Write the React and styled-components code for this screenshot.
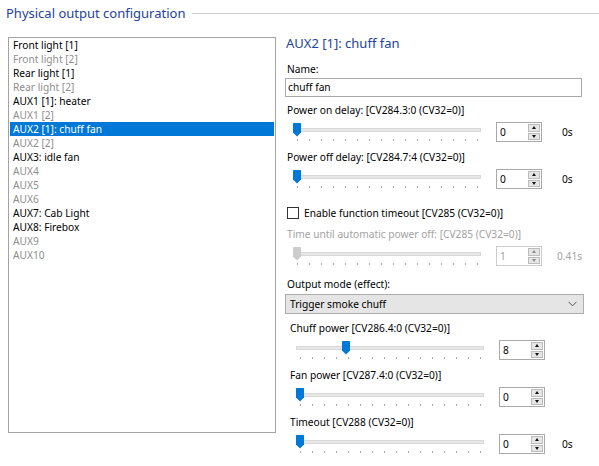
import React from 'react';
import styled, { createGlobalStyle } from 'styled-components';

const Global = createGlobalStyle`
  html, body { margin: 0; padding: 0; background: #fff; }
  body { font-family: "Noto Sans", "Open Sans", sans-serif; font-size: 10.2px; color: #000; }
`;

const Window = styled.div`
  width: 599px;
  height: 466px;
  overflow: hidden;
  background: #fff;
`;

const Header = styled.div`
  display: flex;
  align-items: center;
  padding: 3px 0 0 6px;
  height: 20px;
`;

const HeaderTitle = styled.div`
  font-size: 13px;
  line-height: 20px;
  color: #24439a;
  white-space: nowrap;
`;

const HeaderRule = styled.div`
  flex: 1;
  height: 1px;
  background: #cfcfcf;
  margin-left: 7px;
  margin-top: 1px;
`;

const Main = styled.div`
  display: flex;
  padding-left: 8px;
  margin-top: 10px;
`;

const ListBox = styled.div`
  width: 268px;
  height: 396px;
  box-sizing: border-box;
  border: 1px solid #a3a3a3;
  margin-top: 4px;
  padding: 0 1px;
  flex: none;
`;

const ListItem = styled.div`
  height: 14px;
  line-height: 14px;
  padding-left: 3px;
  white-space: nowrap;
  color: ${p => (p.$selected ? '#fff' : p.$active ? '#000' : '#8d8d8d')};
  background: ${p => (p.$selected ? '#0078d7' : 'transparent')};
`;

const Panel = styled.div`
  width: 300px;
  margin-left: 9px;
  display: flex;
  flex-direction: column;
`;

const PanelTitle = styled.div`
  font-size: 13px;
  line-height: 20px;
  height: 20px;
  color: #24439a;
  padding-left: 1px;
`;

const Label = styled.div`
  height: 14px;
  line-height: 14px;
  margin-top: ${p => p.$mt || 0}px;
  padding-left: 2px;
  white-space: nowrap;
  color: ${p => (p.$disabled ? '#a2a2a2' : '#000')};
`;

const TextBox = styled.div`
  height: 19px;
  box-sizing: border-box;
  border: 1px solid #a9a9a9;
  margin-top: 2px;
  width: 297px;
  padding-left: 2px;
  line-height: 17px;
`;

const SliderRow = styled.div`
  display: flex;
  align-items: flex-start;
  height: 24px;
  margin-top: 3px;
`;

const SliderBox = styled.div`
  position: relative;
  width: 196px;
  height: 24px;
  flex: none;
  margin-left: 4px;
`;

const Track = styled.div`
  position: absolute;
  left: 4px;
  width: 186px;
  top: 8px;
  height: 2px;
  background: #e7e7e7;
  border: 1px solid #d8d8d8;
`;

const ThumbSvg = styled.svg`
  position: absolute;
  top: 3px;
`;

const Ticks = styled.div`
  position: absolute;
  left: 8px;
  width: 181px;
  top: 19px;
  height: 2px;
  display: flex;
  justify-content: space-between;
`;

const Tick = styled.span`
  width: 1px;
  height: 2px;
  background: #a8a8a8;
`;

const Spin = styled.div`
  display: flex;
  width: 46px;
  height: 20px;
  box-sizing: border-box;
  border: 1px solid ${p => (p.$disabled ? '#cccccc' : '#a9a9a9')};
  margin-left: 11px;
  margin-top: 2px;
  background: #fff;
  padding: 1px;
  flex: none;
`;

const SpinValue = styled.div`
  flex: 1;
  padding-left: 2px;
  line-height: 16px;
  color: ${p => (p.$disabled ? '#a2a2a2' : '#000')};
`;

const SpinButtons = styled.div`
  display: flex;
  flex-direction: column;
  gap: 1px;
  width: 12px;
`;

const SpinBtn = styled.div`
  flex: 1;
  box-sizing: border-box;
  background: #e6e6e6;
  border: 1px solid #bcbcbc;
  display: flex;
  align-items: center;
  justify-content: center;
`;

const Arrow = styled.span`
  width: 0;
  height: 0;
  border-left: 2.5px solid transparent;
  border-right: 2.5px solid transparent;
  ${p => (p.$down ? 'border-top' : 'border-bottom')}: 3px solid ${p => (p.$disabled ? '#8a8a8a' : '#111')};
`;

const Unit = styled.div`
  margin-left: ${p => p.$ml || 20}px;
  margin-top: 2px;
  line-height: 20px;
  color: ${p => (p.$disabled ? '#a2a2a2' : '#000')};
`;

const CheckRow = styled.div`
  display: flex;
  align-items: center;
  height: 14px;
  margin-top: 15px;
  padding-left: 2px;
`;

const CheckBox = styled.span`
  width: 12px;
  height: 12px;
  box-sizing: border-box;
  border: 1px solid #333;
  background: #fff;
  margin-right: 5px;
`;

const Select = styled.div`
  display: flex;
  align-items: center;
  justify-content: space-between;
  height: 20px;
  box-sizing: border-box;
  width: 299px;
  margin-top: 3px;
  background: #e5e5e5;
  border: 1px solid #adadad;
  padding: 0 6px 0 4px;
`;

const SubGroup = styled.div`
  display: flex;
  flex-direction: column;
  padding-left: 3px;
`;

const items = [
  ['Front light [1]', true],
  ['Front light [2]', false],
  ['Rear light [1]', true],
  ['Rear light [2]', false],
  ['AUX1 [1]: heater', true],
  ['AUX1 [2]', false],
  ['AUX2 [1]: chuff fan', true, true],
  ['AUX2 [2]', false],
  ['AUX3: idle fan', true],
  ['AUX4', false],
  ['AUX5', false],
  ['AUX6', false],
  ['AUX7: Cab Light', true],
  ['AUX8: Firebox', true],
  ['AUX9', false],
  ['AUX10', false],
];

function Slider({ value, max, disabled }) {
  const left = 4 + (value / max) * 180;
  return (
    <SliderBox>
      <Track />
      <ThumbSvg width="8" height="14" viewBox="0 0 8 14" style={{ left }}>
        <path d="M0 0.5 Q0 0 0.5 0 H7.5 Q8 0 8 0.5 V9.5 L4 13.5 L0 9.5 Z" fill={disabled ? '#cccccc' : '#0078d7'} />
      </ThumbSvg>
      <Ticks>
        {Array.from({ length: 16 }).map((_, i) => (
          <Tick key={i} />
        ))}
      </Ticks>
    </SliderBox>
  );
}

function SpinBox({ value, disabled }) {
  return (
    <Spin $disabled={disabled}>
      <SpinValue $disabled={disabled}>{value}</SpinValue>
      <SpinButtons>
        <SpinBtn><Arrow $disabled={disabled} /></SpinBtn>
        <SpinBtn><Arrow $down $disabled={disabled} /></SpinBtn>
      </SpinButtons>
    </Spin>
  );
}

function SliderControl({ value, max = 15, spin, unit, unitMl, disabled }) {
  return (
    <SliderRow>
      <Slider value={value} max={max} disabled={disabled} />
      <SpinBox value={spin} disabled={disabled} />
      {unit && <Unit $ml={unitMl} $disabled={disabled}>{unit}</Unit>}
    </SliderRow>
  );
}

export default function App() {
  return (
    <Window>
      <Global />
      <Header>
        <HeaderTitle>Physical output configuration</HeaderTitle>
        <HeaderRule />
      </Header>
      <Main>
        <ListBox>
          {items.map(([t, active, sel]) => (
            <ListItem key={t} $active={active} $selected={sel}>{t}</ListItem>
          ))}
        </ListBox>
        <Panel>
          <PanelTitle>AUX2 [1]: chuff fan</PanelTitle>
          <Label $mt={9}>Name:</Label>
          <TextBox>chuff fan</TextBox>
          <Label $mt={6}>Power on delay: [CV284.3:0 (CV32=0)]</Label>
          <SliderControl value={0} spin="0" unit="0s" />
          <Label $mt={6}>Power off delay: [CV284.7:4 (CV32=0)]</Label>
          <SliderControl value={0} spin="0" unit="0s" />
          <CheckRow>
            <CheckBox />
            Enable function timeout [CV285 (CV32=0)]
          </CheckRow>
          <Label $mt={7} $disabled>Time until automatic power off: [CV285 (CV32=0)]</Label>
          <SliderControl value={0} spin="1" unit="0.41s" unitMl={15} disabled />
          <Label $mt={9}>Output mode (effect):</Label>
          <Select>
            <span>Trigger smoke chuff</span>
            <svg width="9" height="6" viewBox="0 0 9 6">
              <path d="M0.5 0.8 L4.5 4.8 L8.5 0.8" fill="none" stroke="#555" strokeWidth="1" />
            </svg>
          </Select>
          <SubGroup>
            <Label $mt={7}>Chuff power [CV286.4:0 (CV32=0)]</Label>
            <SliderControl value={8} max={31} spin="8" />
            <Label $mt={6}>Fan power [CV287.4:0 (CV32=0)]</Label>
            <SliderControl value={0} spin="0" />
            <Label $mt={6}>Timeout [CV288 (CV32=0)]</Label>
            <SliderControl value={0} spin="0" unit="0s" unitMl={17} />
          </SubGroup>
        </Panel>
      </Main>
    </Window>
  );
}
